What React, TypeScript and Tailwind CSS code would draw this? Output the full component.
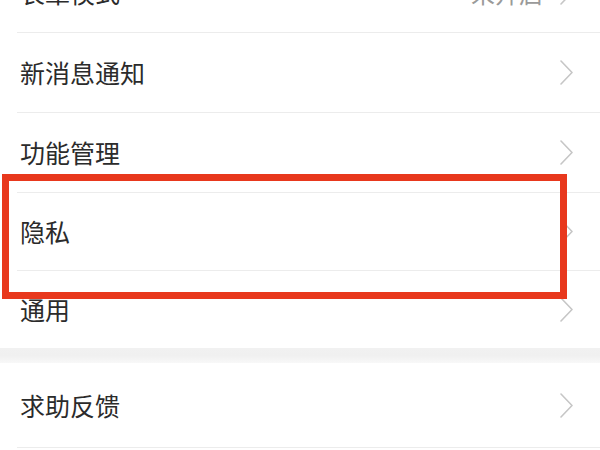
import React from "react";

function Chevron() {
  return (
    <svg width="13" height="25" viewBox="0 0 13 25" fill="none" className="shrink-0">
      <polyline points="1,1 12,12.5 1,24" stroke="#c6c6c6" strokeWidth="1.6" strokeLinecap="round" strokeLinejoin="round" />
    </svg>
  );
}

function Row({ label, value, h, divider = true }: { label: string; value?: string; h: string; divider?: boolean }) {
  return (
    <div className={`ml-[17px] ${h} flex items-center pl-[3px] pr-[27px] ${divider ? "border-b border-[#ececec]" : ""}`}>
      <span className="flex-1 text-[25px] leading-none text-[#2b2b2b]">{label}</span>
      {value && <span className="mr-[17px] text-[24px] leading-none text-[#9a9a9a]">{value}</span>}
      <Chevron />
    </div>
  );
}

export default function App() {
  return (
    <div
      className="relative w-[600px] h-[450px] overflow-hidden bg-white"
      style={{ fontFamily: '"Noto Sans CJK SC", "Noto Sans", sans-serif' }}
    >
      <div className="-mt-[47px]">
        <Row label="长辈模式" value="未开启" h="h-[80px]" />
        <Row label="新消息通知" h="h-[80px]" />
        <Row label="功能管理" h="h-[80px]" />
        <Row label="隐私" h="h-[78px]" />
        <Row label="通用" h="h-[77px]" divider={false} />
        <div className="h-[15px] bg-gradient-to-b from-[#f1f1f1] via-[#f0f0f0] to-[#f8f8f8]" />
        <Row label="求助反馈" h="h-[85px]" />
      </div>
      <div className="absolute left-[2px] top-[174px] w-[565px] h-[125px] border-[7px] border-[#e8381d]" />
    </div>
  );
}
